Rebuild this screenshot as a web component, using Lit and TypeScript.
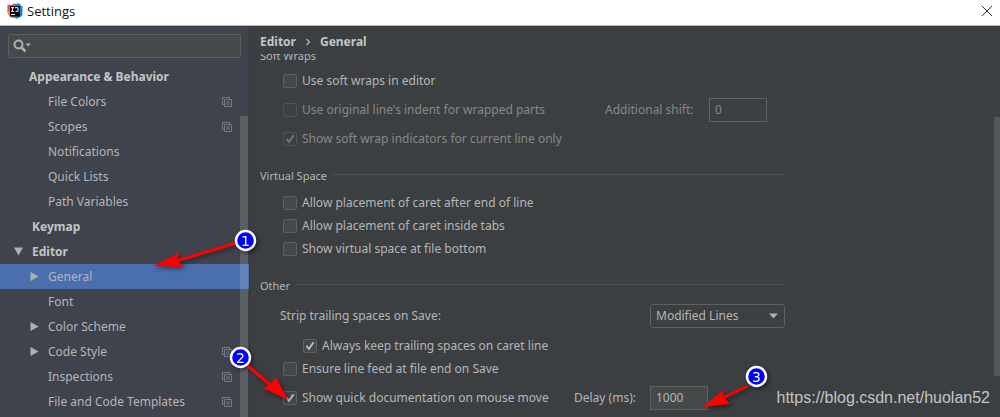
import { LitElement, html, css, svg, nothing } from "lit";
import { customElement, property } from "lit/decorators.js";

interface TreeItem {
  label: string;
  kind: "group" | "child";
  arrow?: "open" | "closed";
  copy?: boolean;
  selected?: boolean;
}

const TREE: TreeItem[] = [
  { label: "Appearance & Behavior", kind: "group" },
  { label: "File Colors", kind: "child", copy: true },
  { label: "Scopes", kind: "child", copy: true },
  { label: "Notifications", kind: "child" },
  { label: "Quick Lists", kind: "child" },
  { label: "Path Variables", kind: "child" },
  { label: "Keymap", kind: "group" },
  { label: "Editor", kind: "group", arrow: "open" },
  { label: "General", kind: "child", arrow: "closed", selected: true },
  { label: "Font", kind: "child" },
  { label: "Color Scheme", kind: "child", arrow: "closed" },
  { label: "Code Style", kind: "child", arrow: "closed", copy: true },
  { label: "Inspections", kind: "child", copy: true },
  { label: "File and Code Templates", kind: "child", copy: true },
];

@customElement("check-option")
class CheckOption extends LitElement {
  @property() label = "";
  @property({ type: Boolean }) checked = false;
  @property({ type: Boolean }) disabled = false;

  static styles = css`
    :host { display: block; }
    label { display: flex; align-items: center; gap: 5px; color: #b4b6b7; white-space: nowrap; }
    .box { display: grid; }
    input {
      grid-area: 1 / 1; appearance: none; box-sizing: border-box; width: 14px; height: 14px; margin: 0;
      border: 1px solid #5e6162; border-radius: 2px; background: #43494a;
    }
    svg { grid-area: 1 / 1; pointer-events: none; }
    .off { color: #85888a; }
    .off input { border-color: #505355; background: #3c3f41; }
    path { fill: none; stroke: #b9bbbc; stroke-width: 2; }
    .off path { stroke: #737678; }
  `;

  render() {
    return html`<label class=${this.disabled ? "off" : ""}>
      <span class="box">
        <input type="checkbox" .checked=${this.checked} ?disabled=${this.disabled} />
        ${this.checked
          ? html`<svg width="14" height="14" viewBox="0 0 14 14" aria-hidden="true"><path d="M3.5 6.8 6 9.8 10.6 3.2" /></svg>`
          : nothing}
      </span>
      <span>${this.label}</span>
    </label>`;
  }
}

@customElement("settings-tree")
class SettingsTree extends LitElement {
  static styles = css`
    :host { display: block; }
    ul { list-style: none; margin: 0; padding: 0; }
    li { display: flex; align-items: center; height: 25px; padding-right: 17px; color: #b4b6b8; white-space: nowrap; line-height: 18px; }
    .arrow { display: flex; justify-content: flex-end; }
    .group { font-weight: 700; color: #c3c5c7; }
    .group .arrow { width: 23px; margin-right: 9px; }
    .group.lead .arrow { margin-right: 6px; }
    .child .arrow { width: 39px; margin-right: 9px; }
    .selected { background: #4b6eaf; }
    .label { flex: 1; }
    .arrow svg { fill: #adafb1; }
  `;

  render() {
    return html`<ul>
      ${TREE.map(
        (t, i) => html`<li class="${t.kind} ${t.selected ? "selected" : ""} ${i === 0 ? "lead" : ""}">
          <span class="arrow">
            ${t.arrow === "open"
              ? html`<svg width="9" height="9" viewBox="0 0 9 9"><path d="M0 0.5h9L4.500 8.500z" /></svg>`
              : t.arrow === "closed"
                ? html`<svg width="9" height="9" viewBox="0 0 9 9"><path d="M0.500 0v9L8.700 4.500z" /></svg>`
                : nothing}
          </span>
          <span class="label">${t.label}</span>
          ${t.copy
            ? html`<svg width="10" height="10" viewBox="0 0 10 10" fill="none" stroke="#737b85" stroke-width="1">
                <path d="M2.500 7.500H.5V.5h7V2" /><path d="M2.500 2.500h7v7h-7z" /><path d="M4 5h4M4 7h4" />
              </svg>`
            : nothing}
        </li>`
      )}
    </ul>`;
  }
}

@customElement("app-root")
class AppRoot extends LitElement {
  static styles = css`
    :host {
      display: flex; flex-direction: column; position: relative; height: 100vh; overflow: hidden;
      font: 12px/20px "Noto Sans", "Open Sans", sans-serif; background: #3c3f41; color: #b4b6b7;
    }
    .title {
      display: flex; align-items: center; gap: 4px; box-sizing: border-box; height: 26px; flex: none;
      padding: 0 7px 3px; background: #fff; color: #111; border-bottom: 1px solid #b5b9b9;
      font-size: 13px; font-family: "Open Sans", sans-serif;
    }
    .title span { flex: 1; }
    .close { display: flex; padding: 0; border: 0; background: none; }
    .body { display: flex; flex: 1; min-height: 0; }
    .side {
      position: relative; box-sizing: border-box; width: 250px; flex: none; overflow: hidden;
      background: #3f434c; border-right: 1px solid #35383b;
    }
    .search {
      display: flex; align-items: center; box-sizing: border-box; height: 24px; margin: 8px 8px 6px;
      padding-left: 4px; border: 1px solid #5c6061; border-radius: 3px; background: #45494a;
    }
    .search input { flex: 1; min-width: 0; border: 0; padding: 0; background: none; font: inherit; color: inherit; outline: none; }
    .side .thumb { position: absolute; right: 1px; top: 90px; bottom: 0; width: 8px; background: rgb(255 255 255 / 15%); }
    .main { flex: 1; min-width: 0; display: flex; flex-direction: column; }
    .crumbs { display: flex; flex: none; gap: 9px; height: 20px; padding: 6px 10px 2px; font-weight: 700; color: #c3c5c7; }
    .crumbs svg { align-self: center; }
    .scroll { display: flex; justify-content: space-between; flex: 1; min-height: 0; overflow: hidden; }
    .form { box-sizing: border-box; width: 535px; margin-top: -8px; padding-left: 10px; }
    .bar { width: 6px; padding-top: 63px; }
    .bar .thumb { height: 259px; background: #55585a; }
    section { margin-bottom: 16px; }
    h2 { display: flex; gap: 5px; margin: 0 0 5px; font-size: 11px; font-weight: 400; line-height: 20px; }
    h2::after { content: ""; flex: 1; height: 1px; margin-top: 8px; background: #4e5152; }
    .first { margin-bottom: 13px; }
    .first h2 { margin-bottom: 0; }
    .first h2::after { margin-top: 6px; }
    .row { display: flex; align-items: center; height: 23px; padding-left: 23px; }
    .tall { height: 29px; }
    .strip { padding-left: 20px; }
    .nested { padding-left: 43px; margin-top: 4px; }
    .last { margin-top: 3px; }
    .grow { flex: 1; }
    .field { display: grid; grid-template-columns: 1fr 58px; align-items: center; white-space: nowrap; }
    .off { color: #85888a; }
    .field input, select { box-sizing: border-box; height: 24px; font: inherit; border: 1px solid #5e6162; color: #b4b6b7; }
    .field input { width: 58px; padding: 0 5px; background: #45494a; }
    .off input { background: #3c3f41; color: #85888a; }
    .shift { width: 162px; margin-right: 18px; }
    .delay { width: 134px; margin-right: 77px; }
    .pick { display: grid; align-items: center; width: 135px; }
    .pick select { grid-area: 1 / 1; appearance: none; border-radius: 3px; padding: 0 5px; background: #3c3f41; }
    .pick svg { grid-area: 1 / 1; justify-self: end; margin-right: 7px; pointer-events: none; }
    .notes { position: absolute; left: 0; top: 0; pointer-events: none; filter: drop-shadow(2px 2px 2px rgb(0 0 0 / 45%)); }
    .notes text { font: 14px/14px "DejaVu Sans", sans-serif; fill: #fff; text-anchor: middle; }
    .mark { position: absolute; right: 10px; bottom: 9px; font: 16px/20px "Liberation Sans", sans-serif; color: #c3c5c6; }
  `;

  private note(n: number, x: number, y: number, line: string, head: string) {
    return svg`<path d=${line} stroke="#f00" stroke-width="3" fill="none" /><path d=${head} fill="#f00" />
      <circle cx=${x} cy=${y} r="9.500" fill="#00f" stroke="#fff" stroke-width="2.400" />
      <text x=${x} y=${y + 5}>${n}</text>`;
  }

  render() {
    return html`
      <header class="title">
        <svg width="16" height="16" viewBox="0 0 16 16" aria-hidden="true">
          <path d="M.5 1.500 4 2 8 .3 7 15 3 14 .3 9z" fill="#f4476b" />
          <path d="M.5 9 4 7 6 15 2 13z" fill="#f78b3a" />
          <path d="M8 1 12 .3 15.700 4 15.200 13 10 15.700 6 14z" fill="#1485ee" />
          <path d="M3 3h10v10.500H3z" fill="#080808" />
          <path d="M4 4.700h3M5.500 4.500v4M4 8.300h3M8 4.700h3v3.600H8.500M4 11.500h4" fill="none" stroke="#fff" />
        </svg>
        <span>Settings</span>
        <button class="close" aria-label="Close">
          <svg width="12" height="12" viewBox="0 0 12 12"><path d="M1 1l10 10M11 1 1 11" stroke="#333" stroke-width="1" /></svg>
        </button>
      </header>
      <div class="body">
        <aside class="side">
          <div class="search">
            <svg width="20" height="14" viewBox="0 0 20 14" aria-hidden="true">
              <circle cx="5.500" cy="5.500" r="4" fill="none" stroke="#adb0b1" stroke-width="2" />
              <path d="M8.500 8.500l4 4" stroke="#adb0b1" stroke-width="2.500" />
              <path d="M12.500 4.500h5.500l-2.750 3z" fill="#adb0b1" />
            </svg>
            <input type="text" aria-label="Search settings" />
          </div>
          <settings-tree></settings-tree>
          <div class="thumb"></div>
        </aside>
        <main class="main">
          <div class="crumbs">
            <span>Editor</span>
            <svg width="6" height="8" viewBox="0 0 6 8"><path d="M1.500 1 4.500 4 1.500 7" fill="none" stroke="#b4b6b7" stroke-width="1.300" /></svg>
            <span>General</span>
          </div>
          <div class="scroll">
            <div class="form">
              <section class="first">
                <h2>Soft Wraps</h2>
                <div class="row tall"><check-option label="Use soft wraps in editor"></check-option></div>
                <div class="row tall">
                  <check-option class="grow" disabled label="Use original line's indent for wrapped parts"></check-option>
                  <div class="shift">
                    <label class="field off">Additional shift: <input type="text" value="0" disabled /></label>
                  </div>
                </div>
                <div class="row tall"><check-option disabled checked label="Show soft wrap indicators for current line only"></check-option></div>
              </section>
              <section>
                <h2>Virtual Space</h2>
                <div class="row"><check-option label="Allow placement of caret after end of line"></check-option></div>
                <div class="row"><check-option label="Allow placement of caret inside tabs"></check-option></div>
                <div class="row"><check-option label="Show virtual space at file bottom"></check-option></div>
              </section>
              <section>
                <h2>Other</h2>
                <div class="row tall strip">
                  <label class="grow" for="strip">Strip trailing spaces on Save:</label>
                  <span class="pick">
                    <select id="strip"><option>Modified Lines</option></select>
                    <svg width="9" height="6" viewBox="0 0 9 6"><path d="M0 .5h9L4.500 5.500z" fill="#adafb1" /></svg>
                  </span>
                </div>
                <div class="row nested"><check-option checked label="Always keep trailing spaces on caret line"></check-option></div>
                <div class="row"><check-option label="Ensure line feed at file end on Save"></check-option></div>
                <div class="row tall last">
                  <check-option class="grow" checked label="Show quick documentation on mouse move"></check-option>
                  <div class="delay">
                    <label class="field">Delay (ms): <input type="text" value="1000" /></label>
                  </div>
                </div>
              </section>
            </div>
            <div class="bar"><div class="thumb"></div></div>
          </div>
        </main>
      </div>
      <svg class="notes" width="1000" height="417" viewBox="0 0 1000 417" aria-hidden="true">
        ${this.note(1, 245.5, 240.5, "M236 243 176 261", "M153 266 179 253 177 260 183 267z")}
        ${this.note(2, 240.5, 357.5, "M248 366 274 388", "M288 400 263 388 270 385 276 377z")}
        ${this.note(3, 756.5, 376.5, "M748 386 722 398", "M703 407 722 391 724 397 730 404z")}
      </svg>
      <div class="mark">https://blog.csdn.net/huolan52</div>
    `;
  }
}
